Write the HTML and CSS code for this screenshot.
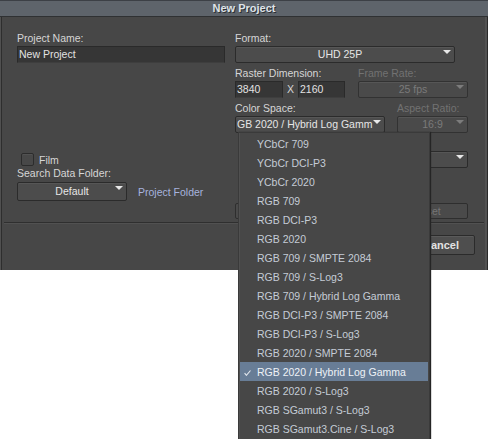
FILE: index.html
```html
<!DOCTYPE html>
<html lang="en">
<head>
    <meta charset="UTF-8">
    <title>New Project</title>
    <link rel="stylesheet" href="styles.css">
</head>
<body>
<div class="dialog">
    <div class="dialog-title">New Project</div>
    <div class="dialog-content">
        <div class="col-left">
            <div class="field-label">Project Name:</div>
            <div class="text-input wide">New Project</div>
            <div class="film-row">
                <span class="checkbox"></span>
                <span class="film-label">Film</span>
            </div>
            <div class="field-label search-label">Search Data Folder:</div>
            <div class="folder-row">
                <div class="select default-select">Default</div>
                <span class="folder-link">Project Folder</span>
            </div>
        </div>
        <div class="col-right">
            <div class="field-label">Format:</div>
            <div class="select format-select">UHD 25P</div>

            <div class="pair-row">
                <div class="raster-group">
                    <div class="field-label">Raster Dimension:</div>
                    <div class="raster-inputs">
                        <div class="text-input raster-w">3840</div>
                        <span class="times">X</span>
                        <div class="text-input raster-h">2160</div>
                    </div>
                </div>
                <div class="rate-group">
                    <div class="field-label disabled">Frame Rate:</div>
                    <div class="select is-disabled">25 fps</div>
                </div>
            </div>

            <div class="pair-row">
                <div class="color-group">
                    <div class="field-label">Color Space:</div>
                    <div class="select left-text">GB 2020 / Hybrid Log Gamm</div>
                </div>
                <div class="aspect-group">
                    <div class="field-label disabled">Aspect Ratio:</div>
                    <div class="select is-disabled">16:9</div>
                </div>
            </div>

            <!-- row hidden under the popup -->
            <div class="pair-row">
                <div class="spacer-group"></div>
                <div class="stereo-group">
                    <div class="field-label"></div>
                    <div class="select"></div>
                </div>
            </div>

            <div class="button-row">
                <div class="flat-btn"></div>
                <div class="flat-btn is-disabled">Reset</div>
            </div>
        </div>
    </div>
    <div class="separator"></div>
    <div class="dialog-footer">
        <div class="push-btn">Cancel</div>
    </div>
</div>

<!-- color space popup -->
<div class="popup-menu">
    <div class="menu-item"><span class="mark"></span>YCbCr 709</div>
    <div class="menu-item"><span class="mark"></span>YCbCr DCI-P3</div>
    <div class="menu-item"><span class="mark"></span>YCbCr 2020</div>
    <div class="menu-item"><span class="mark"></span>RGB 709</div>
    <div class="menu-item"><span class="mark"></span>RGB DCI-P3</div>
    <div class="menu-item"><span class="mark"></span>RGB 2020</div>
    <div class="menu-item"><span class="mark"></span>RGB 709 / SMPTE 2084</div>
    <div class="menu-item"><span class="mark"></span>RGB 709 / S-Log3</div>
    <div class="menu-item"><span class="mark"></span>RGB 709 / Hybrid Log Gamma</div>
    <div class="menu-item"><span class="mark"></span>RGB DCI-P3 / SMPTE 2084</div>
    <div class="menu-item"><span class="mark"></span>RGB DCI-P3 / S-Log3</div>
    <div class="menu-item"><span class="mark"></span>RGB 2020 / SMPTE 2084</div>
    <div class="menu-item selected"><span class="mark"><svg width="7" height="6" viewBox="0 0 7 6"><path d="M0.6 3.2 L2.4 5.3 L6.5 0.5" fill="none" stroke="#e4e9ef" stroke-width="1.1"/></svg></span>RGB 2020 / Hybrid Log Gamma</div>
    <div class="menu-item"><span class="mark"></span>RGB 2020 / S-Log3</div>
    <div class="menu-item"><span class="mark"></span>RGB SGamut3 / S-Log3</div>
    <div class="menu-item"><span class="mark"></span>RGB SGamut3.Cine / S-Log3</div>
</div>
</body>
</html>
```

FILE: styles.css
```css
html,
body {
    margin: 0;
    padding: 0;
    overflow: hidden;
    background: #ffffff;
    font-family: "Liberation Sans", Arial, sans-serif;
    font-size: 10.5px;
}

.dialog {
    width: 488px;
    height: 270px;
    box-sizing: border-box;
    background: #474747;
    border-left: 1px solid #505050;
    border-right: 1px solid #2a2a2a;
    box-shadow: inset 1px 0 #2e2e2e, inset -2px 0 #525252;
    color: #d6d6d6;
}

.dialog-title {
    height: 15px;
    line-height: 15px;
    margin: 0 -1px;
    background: #5e646b;
    border-top: 1px solid #3c4046;
    border-bottom: 1px solid #2f3133;
    text-align: center;
    font-size: 11px;
    font-weight: bold;
    color: #dfe3e8;
    text-shadow: 1px 1px 0 #2c2f33;
}

.dialog-content {
    display: flex;
    height: 205px;
    box-sizing: border-box;
    padding: 15px 0 0 16px;
}

.col-left {
    width: 208px;
}

.col-right {
    width: 233px;
    margin-left: 10px;
}

.field-label {
    height: 13px;
    line-height: 13px;
    margin-bottom: 1px;
    white-space: nowrap;
}

.field-label.disabled {
    color: #727272;
}

.text-input {
    height: 17px;
    box-sizing: border-box;
    line-height: 15px;
    padding-left: 1px;
    background: #363636;
    border: 1px solid #2a2a2a;
    border-bottom-color: #3e3e3e;
    color: #e2e2e2;
}

.select {
    position: relative;
    height: 17px;
    box-sizing: border-box;
    line-height: 15px;
    text-align: center;
    background: #4c4c4c;
    border: 1px solid #2b2b2b;
    border-radius: 2px;
    box-shadow: inset 0 1px #565656;
    color: #e6e6e6;
    white-space: nowrap;
    overflow: hidden;
}

.select::after {
    content: "";
    position: absolute;
    top: 3px;
    right: 3px;
    border-left: 4px solid transparent;
    border-right: 4px solid transparent;
    border-top: 4px solid #e8e8e8;
}

.format-select {
    width: 220px;
    padding-right: 10px;
}

.select.is-disabled {
    color: #7a7a7a;
    background: #4a4a4a;
    border-color: #323232;
}

.select.is-disabled::after {
    border-top-color: #7c7c7c;
}

.select.left-text {
    text-align: left;
    padding-left: 1px;
}

.pair-row {
    display: flex;
    justify-content: space-between;
    margin-top: 4px;
}

.raster-group {
    width: 111px;
}

.raster-inputs {
    display: flex;
    align-items: center;
}

.raster-w {
    width: 48px;
}

.raster-h {
    width: 47px;
}

.times {
    width: 7px;
    margin: 0 4px;
    line-height: 17px;
}

.rate-group {
    width: 110px;
}

.color-group {
    width: 150px;
}

.aspect-group {
    width: 71px;
}

.stereo-group {
    width: 108px;
}

.button-row {
    display: flex;
    justify-content: space-between;
    margin-top: 35px;
}

.flat-btn {
    width: 82px;
    height: 16px;
    box-sizing: border-box;
    line-height: 14px;
    text-align: center;
    background: #4a4a4a;
    border: 1px solid #2e2e2e;
    border-radius: 2px;
    color: #d6d6d6;
}

.flat-btn.is-disabled {
    color: #757575;
}

.film-row {
    display: flex;
    align-items: center;
    height: 13px;
    margin-top: 90px;
    padding-left: 4px;
}

.checkbox {
    width: 13px;
    height: 13px;
    box-sizing: border-box;
    border: 1px solid #2c2c2c;
    border-radius: 2px;
    background: #484848;
    box-shadow: inset 0 1px #525252;
}

.film-label {
    margin-left: 5px;
}

.search-label {
    margin-top: 1px;
    margin-bottom: 2px;
}

.folder-row {
    display: flex;
    align-items: center;
}

.default-select {
    width: 110px;
    height: 19px;
    line-height: 17px;
}

.folder-link {
    margin-left: 11px;
    color: #a6b3de;
}

.separator {
    margin: 0 3px;
    border-top: 1px solid #2f2f2f;
    border-bottom: 1px solid #515151;
}

.dialog-footer {
    display: flex;
    justify-content: flex-end;
    padding: 11px 12px 0 0;
}

.push-btn {
    width: 68px;
    height: 20px;
    box-sizing: border-box;
    line-height: 18px;
    text-align: center;
    font-size: 11px;
    font-weight: bold;
    background: #4e4e4e;
    border: 1px solid #2b2b2b;
    border-radius: 2px;
    box-shadow: inset 0 1px #5a5a5a;
    color: #e2e2e2;
}

.popup-menu {
    position: absolute;
    left: 238px;
    top: 132px;
    width: 192px;
    box-sizing: border-box;
    padding: 1px;
    background: #474747;
    border: 1px solid #3a3a3a;
    box-shadow: 1px 0 1px #252525, inset 1px 0 #505050;
}

.menu-item {
    display: flex;
    height: 18px;
    padding-top: 1px;
    line-height: 19px;
    color: #c5ccd6;
    white-space: nowrap;
}

.menu-item .mark {
    width: 17px;
    padding-left: 4px;
    box-sizing: border-box;
}

.menu-item.selected {
    background: #687d96;
    color: #eef2f6;
}
```
